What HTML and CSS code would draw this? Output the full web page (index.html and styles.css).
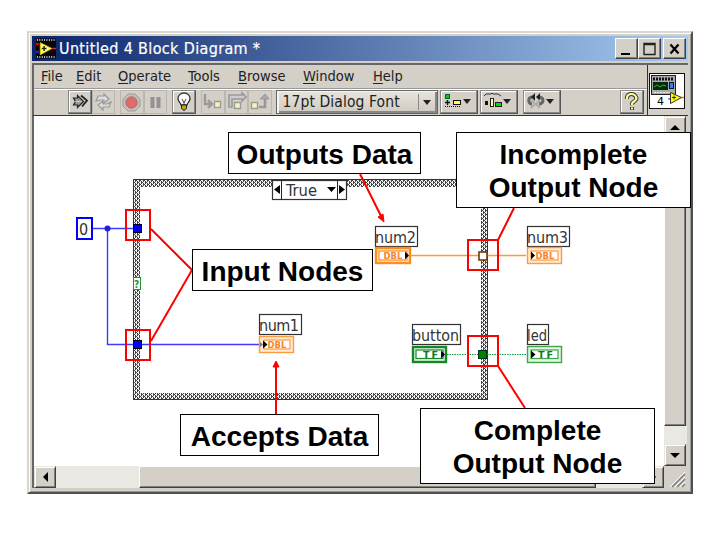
FILE: index.html
```
<!DOCTYPE html>
<html lang="en">
<head>
<meta charset="utf-8">
<title>Untitled 4 Block Diagram</title>
<link rel="stylesheet" href="styles.css">
</head>
<body>
<div class="window">
  <header class="titlebar">
    <svg class="app-icon" width="21" height="21" viewBox="0 0 21 21"><rect width="21" height="21" fill="#080808"/><path d="M1 1.500h19M1 19.500h19" stroke="#ccc" stroke-width="2" stroke-dasharray="1 1.500"/><path d="M0 6h3" stroke="red" stroke-width="2"/><path d="M0 14h3" stroke="#22f" stroke-width="2"/><path d="M4.500 4.500l12 6-12 6.500z" fill="#ffff70" stroke="#ddd000"/><path d="M6 10.500h5M8.500 8v5" stroke="#222" stroke-width="1.500"/><path d="M17 10.500h4" stroke="#e22" stroke-width="1.500"/></svg>
    <h1>Untitled 4 Block Diagram *</h1>
    <div class="controls">
      <button class="control"><svg width="22" height="20"><path d="M5 15h9" stroke="#000" stroke-width="2"/></svg></button>
      <button class="control"><svg width="22" height="20"><path d="M5 4.500h11v11H5zM5 5.500h11" fill="none" stroke="#222" stroke-width="1.400"/></svg></button>
      <button class="control close"><svg width="22" height="20"><path d="M6.500 5.500l8 9M14.500 5.500l-8 9" stroke="#000" stroke-width="2.200"/></svg></button>
    </div>
  </header>
  <div class="bars">
    <div class="bar-rows">
      <nav class="menu">
        <span class="w-file"><u>F</u>ile</span><span class="w-edit"><u>E</u>dit</span><span class="w-operate"><u>O</u>perate</span><span class="w-tools"><u>T</u>ools</span><span class="w-browse"><u>B</u>rowse</span><span class="w-window"><u>W</u>indow</span><span class="w-help"><u>H</u>elp</span>
      </nav>
      <div class="toolbar">
        <button class="tool raised"><svg width="23" height="24"><path d="M5.500 8h4V5.500l6 6-6 6V15h-4l2-3.500z" fill="#999" stroke="#222" stroke-width="1.200"/><path d="M13 5.500l6 5-5 6" fill="none" stroke="#222" stroke-width="1.800"/><path d="M7 11.500h7" stroke="#ccc"/></svg></button>
        <button class="tool"><svg width="23" height="24"><path d="M4 11l2-5h6V4l5 5-5 4v-3H8z" fill="#ddd" stroke="#999" stroke-width="1.200"/><path d="M19 12l-2 5h-6v3l-5-5 5-4v3h4z" fill="#ddd" stroke="#999" stroke-width="1.200"/></svg></button>
        <button class="tool gap-abort"><svg width="23" height="24"><path d="M8 4h7l5 5v7l-5 5H8l-5-5V9z" fill="#c4c0bb" stroke="#999"/><circle cx="11.500" cy="12.500" r="5.700" fill="#de6a6a" stroke="#b86a6a"/></svg></button>
        <button class="tool"><svg width="23" height="24"><path d="M8.500 7v11M14.500 7v11" stroke="#929292" stroke-width="4"/></svg></button>
        <button class="tool raised gap-bulb"><svg width="24" height="24"><path d="M9 15c0-2-3-3-3-6.500a6 5.500 0 0 1 12 0c0 3.500-3 4.500-3 6.500z" fill="#fff" stroke="#333" stroke-width="1.300"/><path d="M10 9l2 4 2-4M12 13v3" stroke="#444" fill="none"/><path d="M9.500 15h5v3.500l-2.500 2-2.500-2z" fill="#bfa417" stroke="#222"/></svg></button>
        <button class="tool gap-step"><svg width="23" height="24"><path d="M4 4v10h5M7 10l4 4-4 4" fill="none" stroke="#999" stroke-width="2.400"/><rect x="13.500" y="11.500" width="6" height="6" fill="#f5f3b4" stroke="#999" stroke-width="1.400"/></svg></button>
        <button class="tool"><svg width="24" height="24"><path d="M4 17V5h13V3l4 4-4 4V9H7v8z" fill="#ccc" stroke="#999" stroke-width="1.600"/><rect x="9.500" y="12.500" width="6" height="6" fill="#f5f3b4" stroke="#999" stroke-width="1.400"/></svg></button>
        <button class="tool"><svg width="23" height="24"><rect x="3.500" y="12.500" width="6" height="6" fill="#f5f3b4" stroke="#999" stroke-width="1.400"/><path d="M11 17h6V7" fill="none" stroke="#999" stroke-width="2.600"/><path d="M12 9l5-5 4 5z" fill="#aaa" stroke="#999"/></svg></button>
        <button class="font-select"><span>17pt Dialog Font</span><i class="divider"></i><i class="down"></i></button>
        <button class="tool raised drop gap-align"><svg width="24" height="24"><rect x="5.500" y="4.500" width="4" height="4" fill="#0c0" stroke="#063"/><path d="M7.500 10v5M5 12.500h5" stroke="#111" stroke-width="1.400"/><path d="M5 16.500h16" stroke="#111" stroke-dasharray="1 1"/><rect x="13.500" y="10.500" width="7" height="4" fill="#ffff50" stroke="#111"/></svg><i class="down"></i></button>
        <button class="tool raised drop gap-distribute"><svg width="24" height="24"><path d="M4 6l2-2h5l1-1 1 1h5l3 2" fill="none" stroke="#333"/><rect x="5" y="11" width="3" height="4" fill="#111"/><rect x="10.500" y="8.500" width="3" height="8" fill="#ffff90" stroke="#222"/><rect x="15.500" y="12.500" width="6" height="4" fill="#0d0" stroke="#222"/></svg><i class="down"></i></button>
        <button class="tool raised drop gap-reorder"><svg width="24" height="24"><path d="M10 7c-6 0-5 7-1 7M15 7c7 0 6 7 1 7" fill="none" stroke="#666" stroke-width="3"/><path d="M12 3L8 7l4 4zM17 3l-4 4 4 4z" fill="#222"/><path d="M8 10l4 4-4 4M17 10l-4 4 4 4" fill="none" stroke="#aaa" stroke-width="2"/></svg><i class="down"></i></button>
        <button class="tool raised help-tool"><svg width="23" height="24"><path d="M7 9V7q1-3 4.500-3T16.500 8q0 2-2.500 3.500T12 15M12 17v3" fill="none" stroke="#333" stroke-width="4"/><path d="M7 9V7q1-3 4.500-3T16.500 8q0 2-2.500 3.500T12 15M12 17.500v2" fill="none" stroke="#ffffa0" stroke-width="2.200"/></svg></button>
      </div>
    </div>
    <div class="icon-pane">
      <svg width="36" height="36" viewBox="0 0 36 36"><rect x=".5" y=".5" width="35" height="35" fill="#fff" stroke="#111"/><rect x="2.500" y="2.500" width="24" height="19" fill="#aaa" stroke="#222"/><path d="M4 6h21" stroke="#111" stroke-width="3" stroke-dasharray="2 1"/><rect x="4" y="9" width="15" height="8" fill="#062b0c"/><path d="M5 14l3-2 3 2 3-2 3 1" fill="none" stroke="#20c020"/><rect x="20.500" y="9.500" width="4" height="6" fill="#28f" stroke="#111"/><path d="M5 19.500h18" stroke="#eee" stroke-dasharray="2 1"/><path d="M19 26h3" stroke="#22f"/><path d="M32 24.500h3" stroke="#f72" stroke-width="1.500"/><path d="M21.500 19.500l11 5-11 6z" fill="#ff0" stroke="#332"/><path d="M23 24.500h4M25 22.500v4" stroke="#332"/><text x="8" y="32" class="vi-number">4</text></svg>
    </div>
  </div>
  <main class="workspace">
    <div class="canvas"></div>
    <div class="vscroll"><button class="arrow"><i class="up"></i></button><div class="thumb-v"></div><div class="track-v"></div><button class="arrow"><i class="down big"></i></button></div>
  </main>
  <footer class="hscroll"><button class="arrow"><i class="left"></i></button><div class="track-h"></div><div class="thumb-h"></div><div class="track-end"></div><button class="arrow"><i class="right"></i></button><div class="grip"><svg width="22" height="22"><path d="M8 21L21 8M13 21l8-8M18 21l3-3" stroke="#808080" stroke-width="1.500"/><path d="M6 21L21 6M11 21l10-10M16 21l5-5" stroke="#fff"/></svg></div></footer>
</div>

<svg class="diagram" width="720" height="540" viewBox="0 0 720 540">
  <defs>
    <pattern id="weave" x="1" y="0" width="4" height="4" patternUnits="userSpaceOnUse" shape-rendering="crispEdges"><rect width="4" height="4" fill="#444"/><path d="M0 0h2v1H0zM2 2h2v1H2zM1 1h1v1H1zM3 3h1v1H3zM3 1h1v1H3zM1 3h1v1H1z" fill="#f2f2f2"/></pattern>
  </defs>
  <path d="M133 179H488V400H133ZM140 187V393H481V187Z" fill="url(#weave)" fill-rule="evenodd"/>
  <path d="M133.500 179.500H487.500V399.500H133.500Z" fill="none" stroke="#333"/>
  <g class="selector"><rect x="272.500" y="180.500" width="74" height="19"/><path d="M281.500 180v20M337.500 180v20"/><path d="M280 185v9l-6-4.500zM339 185v9l6-4.500zM327 187h9l-4.500 5z" class="solid"/><text x="286" y="196" textLength="31" lengthAdjust="spacingAndGlyphs">True</text></g>
  <g class="wire-int"><path d="M92 228.500H134M107.500 228V344.500H261"/><circle cx="107.500" cy="228.500" r="3"/></g>
  <rect x="77" y="218" width="15" height="21" fill="#fff" stroke="#0000ff" stroke-width="2"/>
  <text x="79" y="234.500" class="label">0</text>
  <rect x="133.500" y="277.500" width="7" height="12" fill="#fff" stroke="#269026"/><text x="134" y="288" class="query">?</text>
  <rect x="133.500" y="224.500" width="8" height="8" fill="#0000ff" stroke="#001"/><rect x="133.500" y="340.500" width="8" height="8" fill="#0000ff" stroke="#001"/>
  <path d="M411 255.500H526" stroke="#ff9933" stroke-width="1.500"/>
  <rect x="479" y="252" width="8" height="8" fill="#fff" stroke="#733c08" stroke-width="1.600"/>
  <path d="M447 354.500H526" stroke="#159a40" stroke-dasharray="1.500 1"/>
  <rect x="478.500" y="350.500" width="8" height="8" fill="#008000" stroke="#031"/>

  <g class="tag"><rect x="259.500" y="314.500" width="42" height="20"/><text x="259" y="331" textLength="40">num1</text></g>
  <g class="tag"><rect x="375.500" y="226.500" width="42" height="20"/><text x="375" y="243" textLength="41">num2</text></g>
  <g class="tag"><rect x="527.500" y="226.500" width="42" height="20"/><text x="527" y="243" textLength="41">num3</text></g>
  <g class="tag"><rect x="412.500" y="324.500" width="48" height="20"/><text x="412" y="341" textLength="47" lengthAdjust="spacingAndGlyphs">button</text></g>
  <g class="tag"><rect x="527.500" y="324.500" width="21" height="20"/><text x="527" y="341" textLength="20" lengthAdjust="spacingAndGlyphs">led</text></g>

  <g class="terminal dbl"><rect x="259.500" y="336.500" width="34" height="16"/><rect x="264" y="340" width="26" height="9" class="inner"/><text x="267.500" y="348" textLength="19" lengthAdjust="spacingAndGlyphs">DBL</text><path d="M263 340.500v8l4.500-4z" class="solid"/><path d="M260 342v5l3-2.500z" fill="#777"/></g>
  <g class="terminal dbl control-terminal"><rect x="376" y="248" width="34" height="15"/><rect x="379" y="251" width="28" height="9" class="inner"/><text x="383.500" y="259" textLength="19" lengthAdjust="spacingAndGlyphs">DBL</text><path d="M405 251.500v8l4-4z" class="solid"/></g>
  <g class="terminal dbl"><rect x="527.500" y="247.500" width="34" height="16"/><rect x="531" y="251" width="27" height="9" class="inner"/><text x="535.500" y="259" textLength="19" lengthAdjust="spacingAndGlyphs">DBL</text><path d="M531 251.500v8l4-4z" class="solid"/></g>
  <g class="terminal bool control-terminal"><rect x="413" y="347" width="33" height="15"/><rect x="416" y="350" width="27" height="8.500" class="inner"/><text x="423" y="358" textLength="15">TF</text><path d="M441 350.500v8l4-4z" class="solid"/></g>
  <g class="terminal bool"><rect x="527.500" y="346.500" width="34" height="16"/><rect x="531" y="350" width="27" height="8.500" class="inner"/><text x="538" y="358" textLength="15">TF</text><path d="M531 350.500v8l4.500-4z" class="solid"/></g>

  <g class="mark"><rect x="126" y="210" width="24" height="30"/><rect x="126" y="330" width="24" height="30"/><rect x="468" y="240" width="30" height="30"/><rect x="468" y="336" width="30" height="30"/><path d="M151 229L192 270L151 341M360 174L381 216M514 208L498 240M498 366L525 408M276 414V367"/><path d="M384 222l-6-5 5-3zM276 361l-3 6h6z" class="head"/></g>
</svg>
<div class="callout outputs">Outputs Data</div>
<div class="callout incomplete">Incomplete<br>Output Node</div>
<div class="callout inputs">Input Nodes</div>
<div class="callout accepts">Accepts Data</div>
<div class="callout complete">Complete<br>Output Node</div>
</body>
</html>
```
FILE: styles.css
```
* { box-sizing: border-box; }
body { margin: 0; width: 720px; height: 540px; overflow: hidden; background: #fff; padding: 31px 0 0 27px; font-family: "DejaVu Sans", sans-serif; font-stretch: condensed; color: #222; }
button { font: inherit; color: inherit; padding: 0; margin: 0; border: 0; border-radius: 0; background: #d4d0c8; }
svg { display: block; flex: none; }
.window { width: 666px; height: 463px; background: #d4d0c8; padding: 3px 3px 4px; border: 2px solid; border-color: #d9d7cf #505050 #505050 #d9d7cf; box-shadow: inset 1px 1px #fff, inset -1px -1px #999; }
.titlebar { height: 25px; display: flex; align-items: center; background: linear-gradient(90deg, #0a246a, #a6caf0); padding: 0 2px 0 4px; }
.app-icon { width: 20px; height: 21px; }
h1 { margin: 0 0 0 3px; font-size: 16px; line-height: 24px; font-weight: normal; color: #fff; -webkit-text-stroke: .2px #fff; width: 215px; white-space: nowrap; letter-spacing: .35px; }
.controls { margin-left: auto; display: flex; }
.control { width: 23px; height: 21px; border: 1px solid; border-color: #fff #404040 #404040 #fff; box-shadow: inset -1px -1px #808080; }
.control.close { margin-left: 2px; }
.bars { display: flex; height: 53px; border-top: 2px solid #666; margin-top: 2px; border-bottom: 1px solid #333; border-left: 2px solid #666; }
.bar-rows { width: 614px; border-right: 1px solid #333; }
.menu { height: 24px; padding-left: 7px; display: flex; font-size: 14.500px; line-height: 23px; border-bottom: 1px solid #999; }
.menu span { white-space: nowrap; }
.menu u { text-underline-offset: 2px; text-decoration-thickness: 1px; }
.w-file { width: 35px; }
.w-edit { width: 42px; }
.w-operate { width: 70px; }
.w-tools { width: 50px; }
.w-browse { width: 65px; }
.w-window { width: 70px; }
.toolbar { display: flex; padding-left: 34px; border-top: 1px solid #fff; height: 26px; }
.tool { width: 23.500px; height: 24px; border: 1px solid #bbb7b0; display: flex; align-items: center; overflow: hidden; }
.tool svg { margin: -1px; }
.raised { border-color: #888 #555 #555 #888; box-shadow: inset -1px -1px #888, inset 1px 1px #fff; }
.gap-abort { margin-left: 5px; }
.gap-bulb { margin-left: 5px; width: 24px; }
.gap-step { margin-left: 5px; }
.font-select { width: 162px; height: 24px; margin-left: 4px; border: 1px solid #666; box-shadow: inset 2px 1px #f5f4ef, inset -2px -2px #888; display: flex; align-items: center; font-size: 15.500px; white-space: nowrap; padding-left: 6px; background: linear-gradient(#e7e4dc, #cfcbc2); }
.font-select span { width: 135px; text-align: left; letter-spacing: .1px; }
.divider { width: 1px; height: 16px; background: #888; margin-right: 4px; }
.down { width: 0; height: 0; border: 4px solid transparent; border-top: 5px solid #222; border-bottom: 0; }
.drop { width: 38px; }
.drop .down { margin-bottom: 2px; }
.gap-align { margin-left: 2px; }
.gap-distribute { margin-left: 2px; }
.gap-reorder { margin-left: 5px; }
.help-tool { margin-left: auto; margin-right: 3px; width: 24px; }
.icon-pane { padding: 8px 0 0 1px; }
.vi-number { font: 11px "DejaVu Sans", sans-serif; }
.workspace { display: flex; height: 350px; margin-left: 2px; }
.canvas { width: 630px; background: #fff; box-shadow: -2px 0 #666; }
.vscroll { width: 23px; display: flex; flex-direction: column; }
.arrow { width: 22px; height: 22px; display: grid; place-items: center; border: 1px solid; border-color: #e8e5df #404040 #404040 #e8e5df; box-shadow: inset 1px 1px #fff, inset -1px -1px #808080; flex: none; }
.thumb-v { height: 288px; width: 22px; border: 1px solid; border-color: #fff #404040 #404040 #fff; box-shadow: inset -1px -1px #808080; }
.track-v { flex: 1; background: #eae8e3; }
.up, .left, .right { width: 0; height: 0; border: 5px solid transparent; }
.up { border-bottom-color: #000; border-top: 0; }
.big { border-width: 5px 5px 0; border-top-color: #000; }
.left { border-right-color: #000; border-left: 0; }
.right { border-left-color: #000; border-right: 0; }
.hscroll { display: flex; height: 22px; margin-left: 2px; box-shadow: -2px 0 #666; }
.track-h { width: 83px; background: #eae8e3; }
.thumb-h { width: 457px; border: 1px solid; border-color: #fff #404040 #404040 #fff; box-shadow: inset -1px -1px #808080; }
.track-end { width: 46px; background: #eae8e3; }
.diagram { position: absolute; left: 0; top: 0; }
.diagram text { font-family: "DejaVu Sans", sans-serif; font-stretch: condensed; font-size: 16px; fill: #333; }
.selector rect, .tag rect { fill: #fff; stroke: #333; stroke-width: 1.200; }
.selector path { stroke: #222; }
.diagram .solid { fill: #000; stroke: none; }
.wire-int path { fill: none; stroke: #3c3cff; stroke-width: 1.400; }
.wire-int circle { fill: #2020dc; }
.diagram .query { font-size: 10px; font-weight: bold; fill: #269026; }
.terminal rect { stroke-width: 1.400; }
.dbl rect { fill: #ffead2; stroke: #ff9a40; }
.bool rect { fill: #e2f5e2; stroke: #3fa64c; }
.dbl.control-terminal rect { stroke: #ff8c1f; stroke-width: 2.400; }
.bool.control-terminal rect { stroke: #17852a; stroke-width: 2.400; }
.terminal .inner, .control-terminal rect.inner { fill: #fff; stroke-width: 1.200 !important; }
.diagram .terminal text { font-size: 9.500px; font-weight: bold; font-stretch: normal; fill: #f5862a; }
.diagram .bool text { fill: #087c27; }
.mark rect, .mark path { fill: none; stroke: #ff0000; stroke-width: 2; }
.mark .head { fill: #ff0000; stroke-width: 1; }
.callout { position: absolute; background: #fff; border: 1px solid #000; color: #000; font: bold 28px/33px "Liberation Sans", sans-serif; text-align: center; white-space: nowrap; padding-top: 5px; }
.outputs { left: 228px; top: 132px; width: 193px; height: 42px; }
.incomplete { left: 456px; top: 132px; width: 235px; height: 76px; }
.inputs { left: 192px; top: 249px; width: 181px; height: 42px; }
.accepts { left: 180px; top: 414px; width: 199px; height: 42px; }
.complete { left: 420px; top: 408px; width: 235px; height: 76px; }
```
